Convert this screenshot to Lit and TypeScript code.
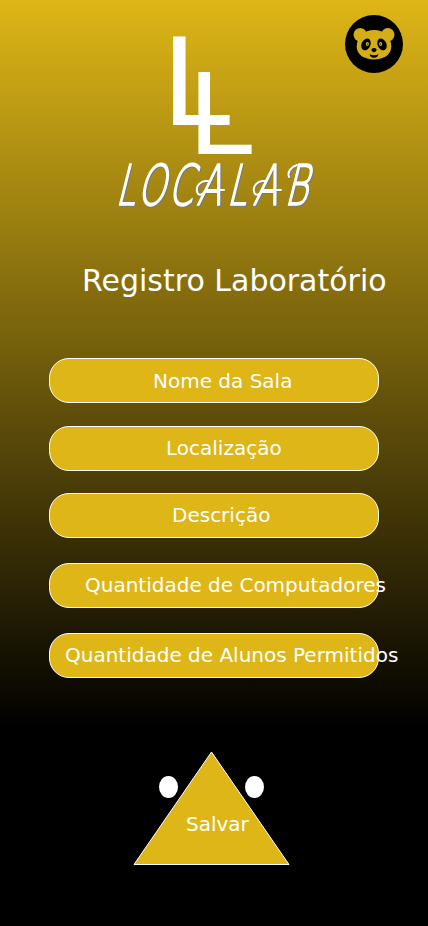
import { LitElement, html, css } from "lit";
import { customElement } from "lit/decorators.js";
import { styleMap } from "lit/directives/style-map.js";

interface Field {
  label: string;
  indent: number;
  gap: number;
  drop: number;
}

const FIELDS: Field[] = [
  { label: "Nome da Sala", indent: 103, gap: 0, drop: 0 },
  { label: "Localização", indent: 116, gap: 23, drop: 2 },
  { label: "Descrição", indent: 122, gap: 22, drop: 2 },
  { label: "Quantidade de Computadores", indent: 35, gap: 25, drop: 2 },
  { label: "Quantidade de Alunos Permitidos", indent: 15, gap: 25, drop: 2 },
];

@customElement("panda-badge")
export class PandaBadge extends LitElement {
  static styles = css`
    :host { display: block; width: 58px; height: 58px; }
    .icon { display: block; }
  `;
  render() {
    return html`
      <svg class="icon" width="58" height="58" viewBox="0 0 58 58">
        <circle cx="29" cy="29" r="29" fill="#000" />
        <g fill="#d4ae16">
          <circle cx="15.2" cy="19.8" r="6.7" />
          <circle cx="42.8" cy="19.8" r="6.7" />
          <path d="M29 15C39 15 46.3 22 46.3 31.5C46.3 40 38.5 44.4 29 44.4S11.7 40 11.7 31.5C11.7 22 19 15 29 15Z" />
        </g>
        <g fill="#000">
          <ellipse cx="21" cy="29.4" rx="4.4" ry="6.2" transform="rotate(24 21 29.4)" />
          <ellipse cx="37" cy="29.4" rx="4.4" ry="6.2" transform="rotate(-24 37 29.4)" />
          <path d="M26.3 34.8Q26.4 33 29 33T31.7 34.8Q31.2 36.9 29 37.2Q26.8 36.9 26.3 34.8Z" />
          <path d="M24.6 39.2Q29 41.2 33.4 39.2Q32.8 42.8 29 42.8T24.6 39.2Z" />
        </g>
        <ellipse cx="22.4" cy="29" rx="1.6" ry="2" fill="#d4ae16" />
        <ellipse cx="35.6" cy="29" rx="1.6" ry="2" fill="#d4ae16" />
        <circle cx="22.7" cy="29.2" r=".6" fill="#000" />
        <circle cx="35.3" cy="29.2" r=".6" fill="#000" />
      </svg>
    `;
  }
}

@customElement("brand-logo")
export class BrandLogo extends LitElement {
  static styles = css`
    :host { display: block; width: 220px; height: 190px; }
    .logo { display: block; overflow: visible; }
    .mono { font-family: "DejaVu Sans", sans-serif; fill: #fff; }
    .script { filter: drop-shadow(1px 1px 0.4px #777a80); }
    .word {
      font-family: "DejaVu Sans", sans-serif;
      font-weight: 200;
      font-size: 56px;
      fill: #fff;
      stroke: #fff;
      stroke-width: 1.7;
      stroke-linejoin: round;
    }
    .swash { fill: none; stroke: #fff; stroke-width: 2; stroke-linecap: round; }
  `;
  render() {
    return html`
      <svg class="logo" width="220" height="190" viewBox="105 30 220 190">
        <text class="mono" font-size="120.4" transform="translate(160.9 124.5) scale(1.033 1)">L</text>
        <text class="mono" font-size="112" transform="translate(187 154) scale(1.045 1)">L</text>
        <g class="script">
          <text class="word" transform="translate(115 205) skewX(-14) scale(.64 1)" x="0 34 82 127 174 215 264">LOCALAB</text>
          <path class="swash" d="M208 181C200 180 195 187 197.500 193C199 196 203 195 206 190M218 190H224" />
          <path class="swash" d="M265 181C257 180 252 187 254.500 193C256 196 260 195 263 190M275 190H281" />
          <path class="swash" d="M289 177C287 172 291 167 297 165" />
        </g>
      </svg>
    `;
  }
}

@customElement("app-root")
export class AppRoot extends LitElement {
  static styles = css`
    :host {
      display: block;
      width: 428px;
      height: 926px;
      overflow: hidden;
      background: linear-gradient(#deb617 0, #000 727px) #000;
      font-family: "DejaVu Sans", sans-serif;
      color: #fff;
    }
    .screen { position: relative; display: flex; flex-direction: column; height: 926px; }
    .badge { position: absolute; top: 15px; right: 25px; }
    .brand { margin: 30px 0 0 105px; }
    .title { margin: 43px 0 0 82px; font-size: 30px; line-height: 36px; font-weight: 400; white-space: nowrap; }
    .fields { display: flex; flex-direction: column; margin: 59px 0 0 49px; width: 330px; }
    .field {
      box-sizing: border-box;
      display: flex;
      align-items: center;
      height: 45px;
      border: 1px solid #fff;
      border-radius: 20px;
      background: #deb617;
      font-size: 20px;
      line-height: 24px;
      white-space: nowrap;
    }
    .save { margin: 72px 0 0 132px; width: 160px; height: 118px; }
    .save-art { display: block; overflow: visible; }
    .save-label { font-size: 20px; fill: #fff; }
  `;
  render() {
    return html`
      <main class="screen">
        <panda-badge class="badge"></panda-badge>
        <brand-logo class="brand"></brand-logo>
        <h1 class="title">Registro Laboratório</h1>
        <div class="fields">
          ${FIELDS.map(
            (f) => html`<div
              class="field"
              style=${styleMap({
                marginTop: `${f.gap}px`,
                paddingLeft: `${f.indent}px`,
                paddingBottom: `${f.drop}px`,
              })}
            ><span>${f.label}</span></div>`
          )}
        </div>
        <div class="save">
          <svg class="save-art" width="160" height="118" viewBox="132 750 160 118">
            <path d="M211.5 752L289 864.5H134Z" fill="#deb617" stroke="#fff" />
            <ellipse cx="168.5" cy="787" rx="9.5" ry="11" fill="#fff" />
            <ellipse cx="254.5" cy="787" rx="9.5" ry="11" fill="#fff" />
            <text class="save-label" x="186" y="831">Salvar</text>
          </svg>
        </div>
      </main>
    `;
  }
}
